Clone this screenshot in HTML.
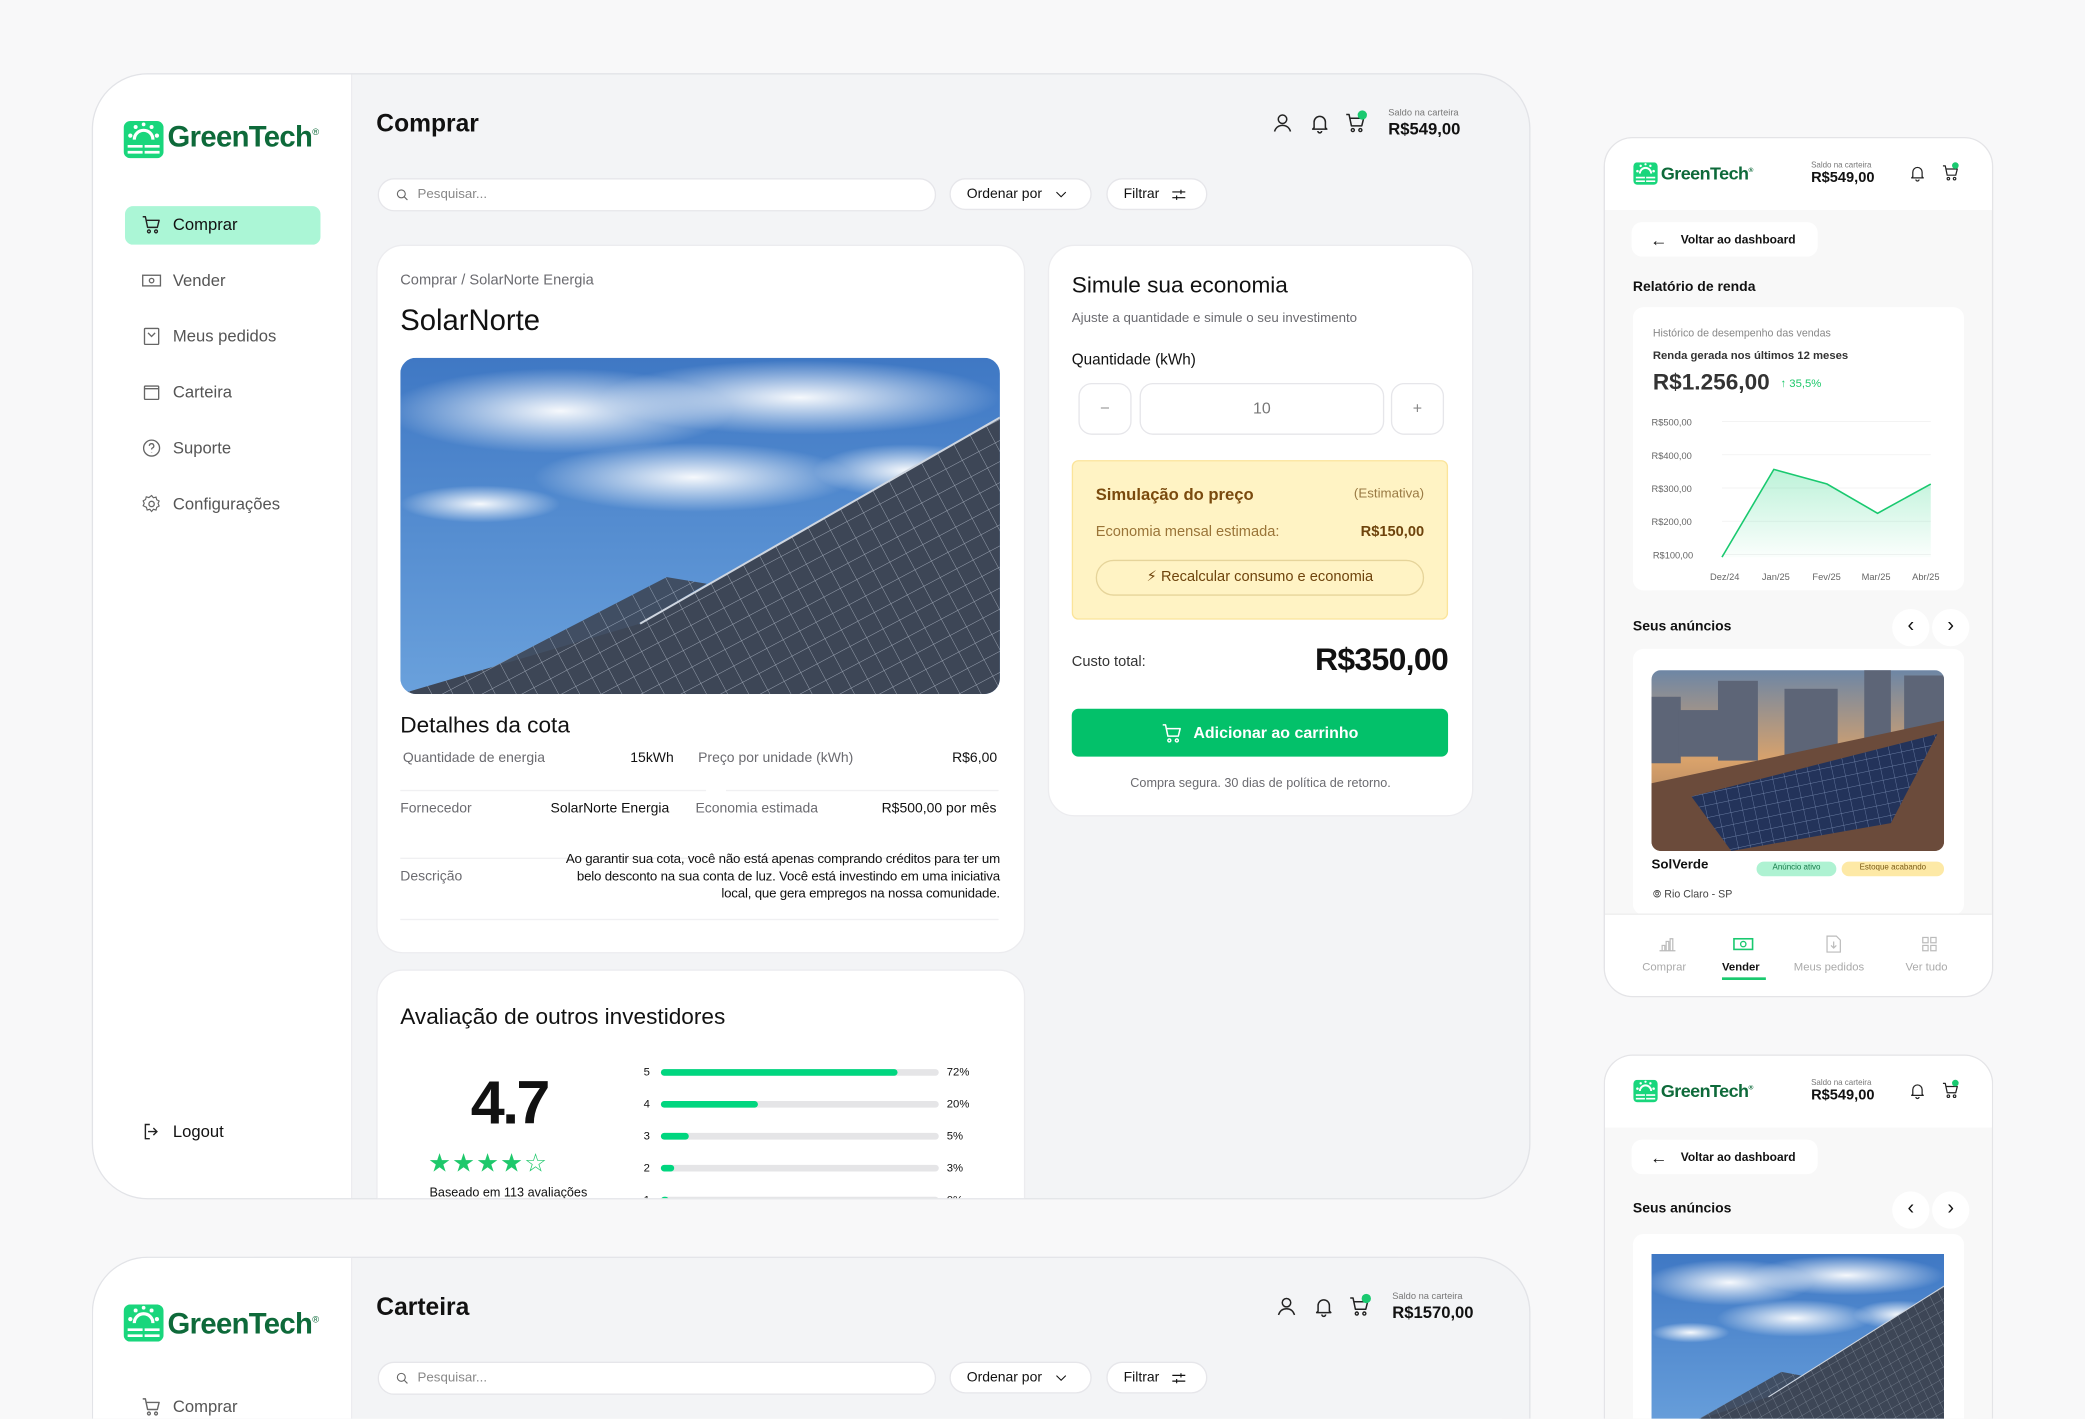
<!DOCTYPE html>
<html><head><meta charset="utf-8">
<style>
*{box-sizing:border-box;margin:0;padding:0}
html,body{width:2085px;height:1419px;overflow:hidden;background:#f8f8f9;font-family:"Liberation Sans",Arial,sans-serif;color:#111}
#s{position:absolute;left:0;top:0;width:1568px;height:1067px;overflow:hidden;transform:scale(1.32972);transform-origin:0 0}
.a{position:absolute}
.frame{position:absolute;border:1px solid #e2e3e7;border-radius:42px;background:#f3f4f6;overflow:hidden}
.side{position:absolute;left:0;top:0;bottom:0;width:195px;background:#fff;border-right:1px solid #ececef}
.nav{position:absolute;left:36px;font-size:12.5px;color:#555;display:flex;align-items:center;gap:8px}
.nav svg{width:16px;height:16px}
.card{position:absolute;background:#fff;border-radius:20px;border:1px solid #ececef}
.pill{position:absolute;background:#fff;border:1px solid #e6e6ea;border-radius:14px;font-size:11px;display:flex;align-items:center}
.g{color:#6b6b70}
.row{position:absolute;font-size:10.5px}
.hr{position:absolute;height:1px;background:#f0f0f2}
.mob{position:absolute;background:#f8f8f8;border:1px solid #e4e4e7;border-radius:22px;overflow:hidden}
.mh{position:absolute;left:0;right:0;top:0;height:54px;background:#fff}
</style></head><body><div id="s">

<svg width="0" height="0" style="position:absolute">
<defs>
<symbol id="logo" viewBox="0 0 30 28"><rect x="0" y="0" width="30" height="28" rx="5" fill="#19d67c"/><path d="M8 14a7 7 0 0 1 14 0" stroke="#fff" stroke-width="2.4" fill="none"/><circle cx="5" cy="11" r="1.6" fill="#fff"/><circle cx="25" cy="11" r="1.6" fill="#fff"/><circle cx="9" cy="4.5" r="1.5" fill="#fff"/><circle cx="21" cy="4.5" r="1.5" fill="#fff"/><circle cx="15" cy="2.5" r="1.4" fill="#fff"/><path d="M3 19h24M3 23.5h24" stroke="#fff" stroke-width="2"/><path d="M15 17v10" stroke="#19d67c" stroke-width="1.5"/></symbol>
<symbol id="cart" viewBox="0 0 24 24"><path d="M2 3h3l2.5 12h11l2-8H6.5" fill="none" stroke="currentColor" stroke-width="1.6" stroke-linejoin="round"/><circle cx="9" cy="19.5" r="1.6" fill="none" stroke="currentColor" stroke-width="1.5"/><circle cx="17" cy="19.5" r="1.6" fill="none" stroke="currentColor" stroke-width="1.5"/></symbol>
<symbol id="bell" viewBox="0 0 24 24"><path d="M6 17V11a6 6 0 0 1 12 0v6l1.5 1.5h-15z M10 20.5a2 2 0 0 0 4 0" fill="none" stroke="currentColor" stroke-width="1.6" stroke-linejoin="round"/></symbol>
<symbol id="user" viewBox="0 0 24 24"><circle cx="12" cy="8" r="4.5" fill="none" stroke="currentColor" stroke-width="1.6"/><path d="M3.5 21c1.5-4.5 4.5-6.5 8.5-6.5s7 2 8.5 6.5" fill="none" stroke="currentColor" stroke-width="1.6"/></symbol>
<symbol id="srch" viewBox="0 0 24 24"><circle cx="10.5" cy="10.5" r="6.5" fill="none" stroke="currentColor" stroke-width="1.8"/><path d="M15.5 15.5l5 5" stroke="currentColor" stroke-width="1.8"/></symbol>
<symbol id="filt" viewBox="0 0 24 24"><path d="M3 8h18M3 16h18" stroke="currentColor" stroke-width="1.6"/><path d="M15 5v6M9 13v6" stroke="currentColor" stroke-width="1.6"/></symbol>
<symbol id="chev" viewBox="0 0 24 24"><path d="M5 9l7 7 7-7" fill="none" stroke="currentColor" stroke-width="1.6"/></symbol>
<linearGradient id="sky" x1="0" y1="0" x2="0" y2="1"><stop offset="0" stop-color="#3f78c4"/><stop offset="1" stop-color="#6aa1dc"/></linearGradient>
<pattern id="grid" width="14" height="14" patternUnits="userSpaceOnUse" patternTransform="rotate(-28)"><rect width="14" height="14" fill="#3d4656"/><path d="M0 0H14M0 0V14" stroke="#9aa3b2" stroke-width=".7"/></pattern>
<radialGradient id="cl"><stop offset="0" stop-color="#fff" stop-opacity=".95"/><stop offset="1" stop-color="#fff" stop-opacity="0"/></radialGradient>
<symbol id="solar" viewBox="0 0 450 253" preserveAspectRatio="none"><rect width="450" height="253" fill="url(#sky)"/>
<ellipse cx="120" cy="40" rx="130" ry="32" fill="url(#cl)"/><ellipse cx="300" cy="30" rx="150" ry="28" fill="url(#cl)"/><ellipse cx="220" cy="90" rx="120" ry="26" fill="url(#cl)"/><ellipse cx="60" cy="110" rx="60" ry="14" fill="url(#cl)"/><ellipse cx="380" cy="85" rx="70" ry="20" fill="url(#cl)"/>
<path d="M0 253L180 200L450 45V253Z" fill="url(#grid)"/><path d="M30 253L200 165L230 170L90 253Z" fill="url(#grid)" opacity=".9"/><path d="M180 200L450 45" stroke="#cfd6e0" stroke-width="1.5"/></symbol>
<linearGradient id="cf" x1="0" y1="0" x2="0" y2="1"><stop offset="0" stop-color="#22d47f" stop-opacity=".3"/><stop offset="1" stop-color="#22d47f" stop-opacity=".02"/></linearGradient>
<linearGradient id="city" x1="0" y1="0" x2="0" y2="1"><stop offset="0" stop-color="#6d86a5"/><stop offset=".5" stop-color="#d9a26b"/><stop offset="1" stop-color="#8a6a55"/></linearGradient>
<pattern id="grid2" width="9" height="9" patternUnits="userSpaceOnUse" patternTransform="rotate(-12)"><rect width="9" height="9" fill="#23335a"/><path d="M0 0H9M0 0V9" stroke="#7f92b8" stroke-width=".5"/></pattern>
</defs></svg>

<!-- MAIN FRAME -->
<div class="frame" style="left:69px;top:55px;width:1082px;height:847px">
 <div class="side">
  <svg class="a" style="left:23px;top:35px;width:30px;height:28px"><use href="#logo"/></svg>
  <div class="a" style="left:56px;top:34px;font-size:22px;font-weight:bold;color:#0e6a3a;letter-spacing:-.5px">GreenTech<sup style="font-size:7px;font-weight:normal">®</sup></div>
  <div class="a" style="left:24px;top:99px;width:147px;height:29px;background:#abf6d6;border-radius:6px"></div>
  <div class="nav" style="top:105px;color:#111"><svg style="color:#222"><use href="#cart"/></svg>Comprar</div>
  <div class="nav" style="top:147px"><svg viewBox="0 0 24 24"><rect x="2" y="6" width="20" height="12" fill="none" stroke="#666" stroke-width="1.5"/><circle cx="12" cy="12" r="2.5" fill="none" stroke="#666" stroke-width="1.5"/></svg>Vender</div>
  <div class="nav" style="top:189px"><svg viewBox="0 0 24 24"><rect x="4" y="3" width="16" height="18" rx="1" fill="none" stroke="#666" stroke-width="1.5"/><path d="M8 8l4 4 4-4" fill="none" stroke="#666" stroke-width="1.5"/></svg>Meus pedidos</div>
  <div class="nav" style="top:231px"><svg viewBox="0 0 24 24"><rect x="4" y="5" width="16" height="15" rx="1" fill="none" stroke="#666" stroke-width="1.5"/><path d="M4 8h16" stroke="#666" stroke-width="1.5"/></svg>Carteira</div>
  <div class="nav" style="top:273px"><svg viewBox="0 0 24 24"><circle cx="12" cy="12" r="9" fill="none" stroke="#666" stroke-width="1.5"/><path d="M9.5 9.5a2.5 2.5 0 1 1 3.5 2.3c-.7.4-1 .9-1 1.7M12 16.5v.5" fill="none" stroke="#666" stroke-width="1.5"/></svg>Suporte</div>
  <div class="nav" style="top:315px"><svg viewBox="0 0 24 24"><circle cx="12" cy="12" r="3" fill="none" stroke="#666" stroke-width="1.5"/><path d="M12 2.5l2 2.5 3-.8.8 3 2.7 1.5-1.2 2.8 1.2 2.8-2.7 1.5-.8 3-3-.8-2 2.5-2-2.5-3 .8-.8-3L2.5 14l1.2-2.8L2.5 8.5 5.2 7 6 4l3 .8z" fill="none" stroke="#666" stroke-width="1.3"/></svg>Configurações</div>
  <div class="nav" style="top:787px;color:#111"><svg viewBox="0 0 24 24"><path d="M10 4H5v16h5M14 8l4 4-4 4M8 12h10" fill="none" stroke="#222" stroke-width="1.6"/></svg>Logout</div>
 </div>
 <div class="a" style="left:213px;top:26px;font-size:18.5px;font-weight:bold">Comprar</div>
 <svg class="a" style="left:886px;top:28px;width:17px;height:17px;color:#222"><use href="#user"/></svg>
 <svg class="a" style="left:914px;top:28px;width:17px;height:17px;color:#222"><use href="#bell"/></svg>
 <svg class="a" style="left:941px;top:28px;width:17px;height:17px;color:#222"><use href="#cart"/></svg>
 <div class="a" style="left:951px;top:27px;width:7px;height:7px;border-radius:4px;background:#19c96f"></div>
 <div class="a" style="left:974px;top:26px;font-size:7px;color:#777">Saldo na carteira</div>
 <div class="a" style="left:974px;top:34px;font-size:12.5px;font-weight:bold">R$549,00</div>
 <div class="pill" style="left:214px;top:78px;width:420px;height:25px;padding-left:12px;color:#888;font-size:10px"><svg style="width:11px;height:11px;color:#666;margin-right:6px"><use href="#srch"/></svg>Pesquisar...</div>
 <div class="pill" style="left:644px;top:78px;width:107px;height:24px;padding-left:12px;font-size:10.5px">Ordenar por<svg style="width:12px;height:12px;margin-left:8px"><use href="#chev"/></svg></div>
 <div class="pill" style="left:762px;top:78px;width:76px;height:24px;padding-left:12px;font-size:10.5px">Filtrar<svg style="width:13px;height:13px;margin-left:8px"><use href="#filt"/></svg></div>

 <div class="card" style="left:213px;top:128px;width:488px;height:533px">
  <div class="a g" style="left:17px;top:20px;font-size:11px">Comprar / SolarNorte Energia</div>
  <div class="a" style="left:17px;top:43px;font-size:22px">SolarNorte</div>
  <svg class="a" style="left:17px;top:84px;width:451px;height:253px;border-radius:12px"><use href="#solar"/></svg>
  <div class="a" style="left:17px;top:351px;font-size:17px">Detalhes da cota</div>
  <div class="row g" style="left:19px;top:379px">Quantidade de energia</div>
  <div class="row" style="left:190px;top:379px">15kWh</div>
  <div class="row g" style="left:241px;top:379px">Preço por unidade (kWh)</div>
  <div class="row" style="left:432px;top:379px">R$6,00</div>
  <div class="hr" style="left:17px;top:409px;width:230px"></div><div class="hr" style="left:262px;top:409px;width:205px"></div>
  <div class="row g" style="left:17px;top:417px">Fornecedor</div>
  <div class="row" style="left:130px;top:417px">SolarNorte Energia</div>
  <div class="row g" style="left:239px;top:417px">Economia estimada</div>
  <div class="row" style="left:379px;top:417px">R$500,00 por mês</div>
  <div class="hr" style="left:17px;top:460px;width:230px"></div><div class="hr" style="left:262px;top:460px;width:205px"></div>
  <div class="row g" style="left:17px;top:468px">Descrição</div>
  <div class="row" style="left:138px;top:455px;width:330px;text-align:right;line-height:13px;font-size:10px;letter-spacing:-.15px">Ao garantir sua cota, você não está apenas comprando créditos para ter um belo desconto na sua conta de luz. Você está investindo em uma iniciativa local, que gera empregos na nossa comunidade.</div>
  <div class="hr" style="left:17px;top:506px;width:450px"></div>
 </div>
 <div class="card" style="left:213px;top:673px;width:488px;height:200px">
  <div class="a" style="left:17px;top:25px;font-size:17px">Avaliação de outros investidores</div>
  <div class="a" style="left:70px;top:72px;font-size:46px;font-weight:bold;letter-spacing:-2px">4.7</div>
  <div class="a" style="left:38px;top:134px;font-size:19px;color:#1ec86b;letter-spacing:1px">★★★★☆</div>
  <div class="a" style="left:39px;top:162px;font-size:9.5px">Baseado em 113 avaliações</div>
  <div class="a" style="left:200px;top:64px;font-size:8.5px;line-height:24px">5<br>4<br>3<br>2<br>1</div>
  <div class="a" style="left:428px;top:64px;font-size:8.5px;line-height:24px">72%<br>20%<br>5%<br>3%<br>0%</div>
  <div class="a" style="left:213px;top:74px;width:209px;height:5px;border-radius:3px;background:#e5e5e7"><div style="width:85%;height:5px;border-radius:3px;background:#00d67f"></div></div>
  <div class="a" style="left:213px;top:98px;width:209px;height:5px;border-radius:3px;background:#e5e5e7"><div style="width:35%;height:5px;border-radius:3px;background:#00d67f"></div></div>
  <div class="a" style="left:213px;top:122px;width:209px;height:5px;border-radius:3px;background:#e5e5e7"><div style="width:10%;height:5px;border-radius:3px;background:#00d67f"></div></div>
  <div class="a" style="left:213px;top:146px;width:209px;height:5px;border-radius:3px;background:#e5e5e7"><div style="width:5%;height:5px;border-radius:3px;background:#00d67f"></div></div>
  <div class="a" style="left:213px;top:170px;width:209px;height:5px;border-radius:3px;background:#e5e5e7"><div style="width:3%;height:5px;border-radius:3px;background:#00d67f"></div></div>
 </div>

 <div class="card" style="left:718px;top:128px;width:320px;height:430px">
  <div class="a" style="left:17px;top:20px;font-size:17px">Simule sua economia</div>
  <div class="a g" style="left:17px;top:49px;font-size:10px">Ajuste a quantidade e simule o seu investimento</div>
  <div class="a" style="left:17px;top:80px;font-size:11.5px">Quantidade (kWh)</div>
  <div class="a" style="left:22px;top:103px;width:40px;height:39px;border:1px solid #e6e6ea;border-radius:10px;text-align:center;line-height:37px;color:#888;font-size:11px">–</div>
  <div class="a" style="left:68px;top:103px;width:184px;height:39px;border:1px solid #e6e6ea;border-radius:10px;text-align:center;line-height:37px;color:#777;font-size:12px">10</div>
  <div class="a" style="left:257px;top:103px;width:40px;height:39px;border:1px solid #e6e6ea;border-radius:10px;text-align:center;line-height:37px;color:#888;font-size:12px">+</div>
  <div class="a" style="left:17px;top:161px;width:283px;height:120px;background:#fff3c4;border:1px solid #fbe49a;border-radius:5px">
   <div class="a" style="left:17px;top:18px;font-size:12.5px;font-weight:bold;color:#7a4a0e">Simulação do preço</div>
   <div class="a" style="right:17px;top:19px;font-size:10px;color:#9a7a44">(Estimativa)</div>
   <div class="a" style="left:17px;top:47px;font-size:11px;color:#9a7438">Economia mensal estimada:</div>
   <div class="a" style="right:17px;top:47px;font-size:11px;font-weight:bold;color:#6e430c">R$150,00</div>
   <div class="a" style="left:17px;top:74px;width:247px;height:27px;border:1px solid #e6d49a;border-radius:14px;text-align:center;line-height:25px;font-size:11px;color:#6e430c">⚡︎ Recalcular consumo e economia</div>
  </div>
  <div class="a" style="left:17px;top:307px;font-size:11px;color:#333">Custo total:</div>
  <div class="a" style="right:18px;top:298px;font-size:24px;font-weight:bold;letter-spacing:-.5px">R$350,00</div>
  <div class="a" style="left:17px;top:348px;width:283px;height:36px;background:#03c16a;border-radius:5px;color:#fff;font-size:12px;font-weight:bold;display:flex;align-items:center;justify-content:center;gap:7px"><svg style="width:17px;height:17px;color:#fff"><use href="#cart"/></svg>Adicionar ao carrinho</div>
  <div class="a g" style="left:0;right:0;top:399px;text-align:center;font-size:9.5px">Compra segura. 30 dias de política de retorno.</div>
 </div>
</div>

<!-- SECOND FRAME -->
<div class="frame" style="left:69px;top:945px;width:1082px;height:122px;border-bottom:none;border-radius:42px 42px 0 0">
 <div class="side">
  <svg class="a" style="left:23px;top:35px;width:30px;height:28px"><use href="#logo"/></svg>
  <div class="a" style="left:56px;top:37px;font-size:22px;font-weight:bold;color:#0e6a3a;letter-spacing:-.5px">GreenTech<sup style="font-size:7px;font-weight:normal">®</sup></div>
  <div class="nav" style="top:104px"><svg style="color:#666"><use href="#cart"/></svg>Comprar</div>
 </div>
 <div class="a" style="left:213px;top:26px;font-size:18.5px;font-weight:bold">Carteira</div>
 <svg class="a" style="left:889px;top:28px;width:17px;height:17px;color:#222"><use href="#user"/></svg>
 <svg class="a" style="left:917px;top:28px;width:17px;height:17px;color:#222"><use href="#bell"/></svg>
 <svg class="a" style="left:944px;top:28px;width:17px;height:17px;color:#222"><use href="#cart"/></svg>
 <div class="a" style="left:954px;top:27px;width:7px;height:7px;border-radius:4px;background:#19c96f"></div>
 <div class="a" style="left:977px;top:26px;font-size:7px;color:#777">Saldo na carteira</div>
 <div class="a" style="left:977px;top:34px;font-size:12.5px;font-weight:bold">R$1570,00</div>
 <div class="pill" style="left:214px;top:78px;width:420px;height:25px;padding-left:12px;color:#888;font-size:10px"><svg style="width:11px;height:11px;color:#666;margin-right:6px"><use href="#srch"/></svg>Pesquisar...</div>
 <div class="pill" style="left:644px;top:78px;width:107px;height:24px;padding-left:12px;font-size:10.5px">Ordenar por<svg style="width:12px;height:12px;margin-left:8px"><use href="#chev"/></svg></div>
 <div class="pill" style="left:762px;top:78px;width:76px;height:24px;padding-left:12px;font-size:10.5px">Filtrar<svg style="width:13px;height:13px;margin-left:8px"><use href="#filt"/></svg></div>
</div>

<!-- MOBILE 1 -->
<div class="mob" style="left:1206px;top:103px;width:293px;height:647px">
 <div class="mh">
  <svg class="a" style="left:21px;top:18px;width:19px;height:17px"><use href="#logo"/></svg>
  <div class="a" style="left:42px;top:19px;font-size:13.5px;font-weight:bold;color:#0e6a3a;letter-spacing:-.4px">GreenTech<sup style="font-size:5px">®</sup></div>
  <div class="a" style="left:155px;top:18px;font-size:6px;color:#777">Saldo na carteira</div>
  <div class="a" style="left:155px;top:24px;font-size:11px;font-weight:bold">R$549,00</div>
  <svg class="a" style="left:228px;top:19px;width:14px;height:14px;color:#222"><use href="#bell"/></svg>
  <svg class="a" style="left:253px;top:19px;width:14px;height:14px;color:#222"><use href="#cart"/></svg>
  <div class="a" style="left:261px;top:18px;width:5px;height:5px;border-radius:3px;background:#19c96f"></div>
 </div>
 <div class="a" style="left:20px;top:63px;width:140px;height:26px;background:#fff;border-radius:8px;font-size:9px;font-weight:bold;display:flex;align-items:center;padding-left:14px;gap:10px"><span style="font-size:13px;font-weight:normal">←</span>Voltar ao dashboard</div>
 <div class="a" style="left:21px;top:106px;font-size:10.5px;font-weight:bold">Relatório de renda</div>
 <div class="a" style="left:21px;top:127px;width:249px;height:213px;background:#fff;border-radius:8px">
  <div class="a g" style="left:15px;top:15px;font-size:8px;color:#888">Histórico de desempenho das vendas</div>
  <div class="a" style="left:15px;top:31px;font-size:8.5px;font-weight:bold;color:#333">Renda gerada nos últimos 12 meses</div>
  <div class="a" style="left:15px;top:47px;font-size:17px;font-weight:bold;color:#333">R$1.256,00</div>
  <div class="a" style="left:111px;top:52px;font-size:8.5px;color:#1ec86b">↑ 35,5%</div>
  <svg class="a" style="left:0;top:0;width:249px;height:213px" viewBox="1228 230 249 213">
   <g stroke="#f0f0f0" stroke-width=".6"><path d="M1295 316H1452M1295 341H1452M1295 366H1452M1295 391H1452M1295 416H1452"/></g>
   <g font-size="7" fill="#666" font-family="Liberation Sans"><text x="1242" y="319">R$500,00</text><text x="1242" y="344">R$400,00</text><text x="1242" y="369">R$300,00</text><text x="1242" y="394">R$200,00</text><text x="1243" y="419">R$100,00</text>
   <text x="1286" y="435">Dez/24</text><text x="1325" y="435">Jan/25</text><text x="1363" y="435">Fev/25</text><text x="1400" y="435">Mar/25</text><text x="1438" y="435">Abr/25</text></g>
   <path d="M1295 418L1334 352L1374 363L1412 385L1452 363V418Z" fill="url(#cf)"/>
   <path d="M1295 418L1334 352L1374 363L1412 385L1452 363" fill="none" stroke="#19c96f" stroke-width="1.2"/>
  </svg>
 </div>
 <div class="a" style="left:21px;top:361px;font-size:10.5px;font-weight:bold">Seus anúncios</div>
 <div class="a" style="left:216px;top:354px;width:28px;height:28px;border-radius:14px;background:#fff;text-align:center;line-height:26px;font-size:15px">‹</div>
 <div class="a" style="left:246px;top:354px;width:28px;height:28px;border-radius:14px;background:#fff;text-align:center;line-height:26px;font-size:15px">›</div>
 <div class="a" style="left:21px;top:384px;width:249px;height:200px;background:#fff;border-radius:8px">
  <svg class="a" style="left:14px;top:16px;width:220px;height:136px;border-radius:7px" viewBox="0 0 220 136" preserveAspectRatio="none">
   <rect width="220" height="136" fill="url(#city)"/>
   <g fill="#5d6577"><rect x="50" y="8" width="30" height="60"/><rect x="100" y="14" width="40" height="50"/><rect x="160" y="0" width="20" height="55"/><rect x="190" y="4" width="30" height="50"/><rect x="0" y="20" width="22" height="50"/><rect x="20" y="30" width="30" height="35"/></g>
   <path d="M0 85L220 38V136H0Z" fill="#6b4b3b"/>
   <path d="M30 95L215 48L180 115L60 136Z" fill="url(#grid2)"/>
  </svg>
  <div class="a" style="left:14px;top:157px;font-size:10px;font-weight:bold">SolVerde</div>
  <div class="a" style="left:93px;top:160px;width:60px;height:11px;border-radius:6px;background:#aef2d2;font-size:6px;text-align:center;line-height:11px;color:#157a47">Anúncio ativo</div>
  <div class="a" style="left:157px;top:160px;width:77px;height:11px;border-radius:6px;background:#fde9a6;font-size:6px;text-align:center;line-height:11px;color:#7a5a14">Estoque acabando</div>
  <div class="a" style="left:15px;top:180px;font-size:8px;color:#444">⦾ Rio Claro - SP</div>
 </div>
 <div class="a" style="left:0;right:0;top:583px;height:62px;background:#fff;border-top:1px solid #eee">
  <div class="a" style="left:28px;top:34px;font-size:8.5px;color:#aaa">Comprar</div>
  <div class="a" style="left:88px;top:34px;font-size:8.5px;font-weight:bold">Vender</div>
  <div class="a" style="left:88px;top:47px;width:33px;height:2px;background:#19c96f"></div>
  <div class="a" style="left:142px;top:34px;font-size:8.5px;color:#aaa">Meus pedidos</div>
  <div class="a" style="left:226px;top:34px;font-size:8.5px;color:#aaa">Ver tudo</div>
  <svg class="a" style="left:40px;top:16px;width:14px;height:12px" viewBox="0 0 14 12"><path d="M1 11h12M3 11V7h2v4M6 11V4h2v7M9 11V2h2v9" fill="none" stroke="#bbb" stroke-width=".9"/></svg>
  <svg class="a" style="left:96px;top:16px;width:16px;height:12px" viewBox="0 0 16 12"><rect x="1" y="2" width="14" height="8" fill="none" stroke="#19c96f" stroke-width="1.2"/><circle cx="8" cy="6" r="2" fill="none" stroke="#19c96f"/></svg>
  <svg class="a" style="left:166px;top:15px;width:12px;height:14px" viewBox="0 0 12 14"><path d="M1 1h7l3 3v9H1z M6 5v5M4 8l2 2 2-2" fill="none" stroke="#bbb" stroke-width=".9"/></svg>
  <svg class="a" style="left:238px;top:16px;width:12px;height:12px" viewBox="0 0 12 12"><g fill="none" stroke="#bbb" stroke-width=".9"><rect x="1" y="1" width="4" height="4"/><rect x="7" y="1" width="4" height="4"/><rect x="1" y="7" width="4" height="4"/><rect x="7" y="7" width="4" height="4"/></g></svg>
 </div>
</div>

<!-- MOBILE 2 -->
<div class="mob" style="left:1206px;top:793px;width:293px;height:274px;border-bottom:none;border-radius:22px 22px 0 0">
 <div class="mh">
  <svg class="a" style="left:21px;top:18px;width:19px;height:17px"><use href="#logo"/></svg>
  <div class="a" style="left:42px;top:19px;font-size:13.5px;font-weight:bold;color:#0e6a3a;letter-spacing:-.4px">GreenTech<sup style="font-size:5px">®</sup></div>
  <div class="a" style="left:155px;top:18px;font-size:6px;color:#777">Saldo na carteira</div>
  <div class="a" style="left:155px;top:24px;font-size:11px;font-weight:bold">R$549,00</div>
  <svg class="a" style="left:228px;top:19px;width:14px;height:14px;color:#222"><use href="#bell"/></svg>
  <svg class="a" style="left:253px;top:19px;width:14px;height:14px;color:#222"><use href="#cart"/></svg>
  <div class="a" style="left:261px;top:18px;width:5px;height:5px;border-radius:3px;background:#19c96f"></div>
 </div>
 <div class="a" style="left:20px;top:63px;width:140px;height:26px;background:#fff;border-radius:8px;font-size:9px;font-weight:bold;display:flex;align-items:center;padding-left:14px;gap:10px"><span style="font-size:13px;font-weight:normal">←</span>Voltar ao dashboard</div>
 <div class="a" style="left:21px;top:109px;font-size:10.5px;font-weight:bold">Seus anúncios</div>
 <div class="a" style="left:216px;top:102px;width:28px;height:28px;border-radius:14px;background:#fff;text-align:center;line-height:26px;font-size:15px">‹</div>
 <div class="a" style="left:246px;top:102px;width:28px;height:28px;border-radius:14px;background:#fff;text-align:center;line-height:26px;font-size:15px">›</div>
 <div class="a" style="left:21px;top:134px;width:249px;height:140px;background:#fff;border-radius:8px 8px 0 0;overflow:hidden">
  <svg class="a" style="left:14px;top:15px;width:220px;height:125px"><svg viewBox="0 0 220 136" width="220" height="136"><use href="#solar" width="220" height="136"/></svg></svg>
 </div>
</div>

</div></body></html>
